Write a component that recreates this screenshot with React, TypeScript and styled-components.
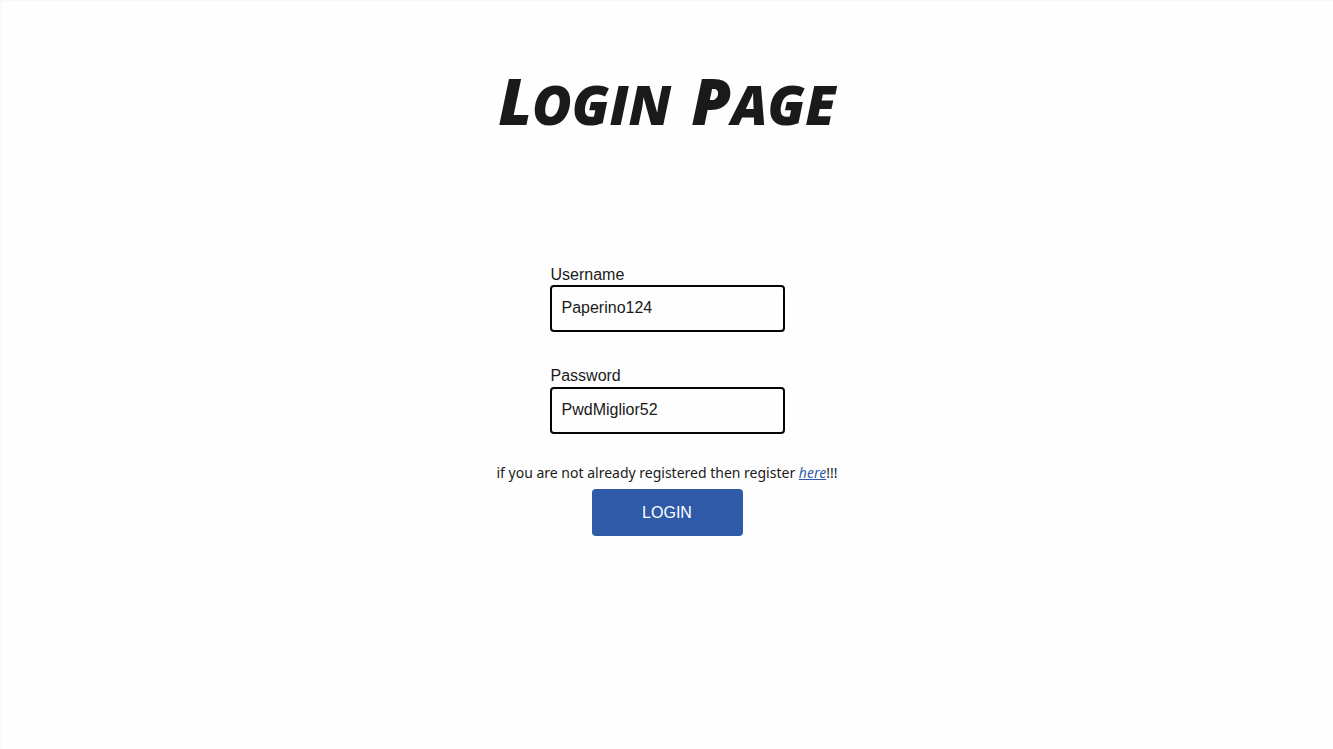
import React from 'react';
import styled, { createGlobalStyle } from 'styled-components';

const GlobalStyle = createGlobalStyle`
  * { box-sizing: border-box; }
  body {
    margin: 0;
    background: #fefefe;
    color: #1a1a1a;
    font-family: Arial, "Liberation Sans", sans-serif;
    font-size: 16px;
  }
`;

const Page = styled.main`
  min-height: 100vh;
  padding-top: 58px;
  display: flex;
  flex-direction: column;
  align-items: center;
  border-top: 1px solid #f8f8f8;
  border-left: 1px solid #f8f8f8;
`;

const Title = styled.h1`
  display: flex;
  gap: 20px;
  margin: 0 0 119px;
  font-family: "Permanent Marker", "Open Sans", sans-serif;
  font-size: 54px;
  font-weight: 800;
  font-style: italic;
  line-height: 84px;
  text-transform: uppercase;
`;

const Word = styled.span`
  display: block;
  &::first-letter { font-size: 64px; }
`;

const Form = styled.form`
  display: flex;
  flex-direction: column;
  align-items: center;
`;

const Field = styled.div<{ $gap: number }>`
  display: flex;
  flex-direction: column;
  gap: ${(p) => p.$gap}px;
  width: 235px;
  margin-bottom: 34px;
`;

const Label = styled.label`
  padding-left: 1px;
  line-height: 20px;
`;

const Input = styled.input`
  height: 47px;
  padding: 0 10px 2px;
  border: 2px solid #050505;
  border-radius: 4px;
  background: #fefefe;
  color: inherit;
  font: inherit;
  outline: none;
`;

const Hint = styled.p`
  margin: -5px 0 6px;
  font-family: "Noto Sans", sans-serif;
  font-size: 14px;
  line-height: 20px;
`;

const RegisterLink = styled.a`
  color: #2e5aa8;
  font-style: italic;
`;

const Button = styled.button`
  width: 151px;
  height: 47px;
  padding: 0;
  border: 0;
  border-radius: 4px;
  background: #2e5aa8;
  color: #fff;
  font: inherit;
`;

export default function App() {
  return (
    <>
      <GlobalStyle />
      <Page>
        <Title>
          <Word>Login</Word> <Word>Page</Word>
        </Title>
        <Form onSubmit={(e) => e.preventDefault()}>
          <Field $gap={0}>
            <Label htmlFor="username">Username</Label>
            <Input id="username" type="text" defaultValue="Paperino124" />
          </Field>
          <Field $gap={1}>
            <Label htmlFor="password">Password</Label>
            <Input id="password" type="text" defaultValue="PwdMiglior52" />
          </Field>
          <Hint>
            if you are not already registered then register{' '}
            <RegisterLink href="#register">here</RegisterLink>!!!
          </Hint>
          <Button type="submit">LOGIN</Button>
        </Form>
      </Page>
    </>
  );
}
